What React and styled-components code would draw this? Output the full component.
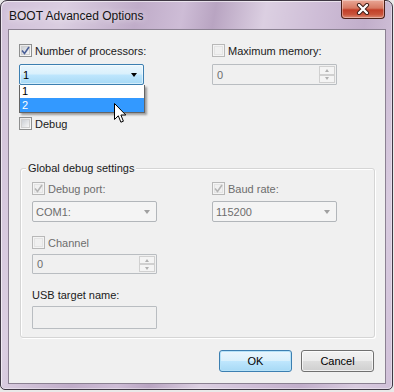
import React from "react";
import styled, { createGlobalStyle } from "styled-components";

const GlobalStyle = createGlobalStyle`
  html, body { margin: 0; padding: 0; background: #e9e9e9; }
  body { font-family: "Liberation Sans", Arial, sans-serif; font-size: 11px; color: #1a1a1a; }
  * { box-sizing: border-box; }
`;

const Window = styled.div`
  position: relative;
  width: 393px;
  height: 390px;
  border: 1px solid #3f3844;
  border-radius: 7px 7px 5px 5px;
  background:
    linear-gradient(100deg, rgba(255,255,255,0.1) 0%, rgba(255,255,255,0.3) 14%, rgba(110,80,120,0.12) 30%, rgba(255,255,255,0.05) 40%, rgba(100,70,110,0.18) 47%, rgba(255,255,255,0.32) 58%, rgba(255,255,255,0.05) 70%, rgba(110,80,120,0.1) 80%, rgba(255,255,255,0.25) 92%, rgba(255,255,255,0.1) 100%),
    #cbb9d4;
  padding: 0 6px 5px 7px;
  display: flex;
  flex-direction: column;
  box-shadow: inset 1px 1px 0 rgba(255,255,255,0.6), inset -1px -1px 0 rgba(255,255,255,0.4);
`;

const TitleBar = styled.div`
  height: 28px;
  display: flex;
  justify-content: space-between;
  align-items: flex-start;
`;

const Title = styled.div`
  font-size: 12px;
  padding-top: 8px;
  padding-left: 1px;
  color: #141414;
  text-shadow: 0 0 6px rgba(255,255,255,0.9);
`;

const CloseButton = styled.div`
  width: 44px;
  height: 19px;
  margin-top: -1px;
  margin-right: 1px;
  border: 1px solid #4b2018;
  border-top: none;
  border-radius: 0 0 4px 4px;
  background: linear-gradient(#e9a796 0%, #d77a63 45%, #c23f28 55%, #c9533a 80%, #dd8a74 100%);
  box-shadow: inset 0 0 0 1px rgba(255,255,255,0.35);
  display: flex;
  align-items: center;
  justify-content: center;
`;

const Client = styled.div`
  flex: 1;
  border: 1px solid #8b8192;
  background: #f0f0f0;
  display: flex;
  flex-direction: column;
  padding: 14px 0 0 10px;
`;

const TwoCols = styled.div`
  display: grid;
  grid-template-columns: 125px 125px;
  column-gap: ${(p) => p.$gap}px;
  align-items: start;
`;

const Col = styled.div`
  display: flex;
  flex-direction: column;
  position: relative;
`;

const CheckRow = styled.div`
  display: flex;
  align-items: center;
  height: 13px;
  gap: 3px;
  margin-top: ${(p) => p.$mt || 0}px;
  color: ${(p) => (p.$disabled ? "#6d6d6d" : "#1a1a1a")};
  white-space: nowrap;
`;

const Box = styled.span`
  width: 13px;
  height: 13px;
  flex: none;
  border: 1px solid ${(p) => (p.$disabled ? "#b8b8b8" : "#8e8f8f")};
  background: ${(p) =>
    p.$disabled
      ? "#f4f4f4"
      : "linear-gradient(135deg, #e6e6e6 0%, #fbfbfb 100%)"};
  display: flex;
  align-items: center;
  justify-content: center;
  position: relative;
  &::before {
    content: "";
    position: absolute;
    inset: 1px;
    border: 1px solid ${(p) => (p.$disabled ? "#e4e4e4" : "#cfcfcf")};
    background: ${(p) => (p.$disabled ? "#f0f0f0" : "linear-gradient(135deg, #cbcfd5 0%, #f6f6f6 100%)")};
  }
  svg { position: relative; }
`;

const ComboWrap = styled.div`
  position: relative;
  margin-top: ${(p) => p.$mt || 0}px;
`;

const Combo = styled.div`
  position: relative;
  height: 21px;
  margin-top: ${(p) => p.$mt || 0}px;
  border: 1px solid ${(p) => (p.$active ? "#3c7fb1" : "#b2b6ba")};
  border-radius: 2px;
  background: ${(p) =>
    p.$active
      ? "linear-gradient(#eaf6fd 0%, #d9f0fc 48%, #bee6fd 52%, #a7d9f5 100%)"
      : "#f4f4f4"};
  color: ${(p) => (p.$active ? "#000" : "#6d6d6d")};
  display: flex;
  align-items: center;
  justify-content: space-between;
  padding: 0 6px 0 3px;
  box-shadow: ${(p) => (p.$active ? "inset 0 0 0 1px rgba(255,255,255,0.5)" : "none")};
`;

const Arrow = styled.span`
  width: 0;
  height: 0;
  border-left: 3.5px solid transparent;
  border-right: 3.5px solid transparent;
  border-top: 4px solid ${(p) => (p.$active ? "#000" : "#a0a0a0")};
`;

const DropList = styled.div`
  position: absolute;
  left: 0;
  top: 100%;
  width: 126px;
  border: 1px solid #646464;
  border-top: none;
  background: #fff;
  box-shadow: 2px 2px 2px rgba(0, 0, 0, 0.35);
  z-index: 2;
`;

const Item = styled.div`
  height: ${(p) => p.$h}px;
  line-height: ${(p) => p.$h}px;
  padding-left: 2px;
  background: ${(p) => (p.$selected ? "#3399ff" : "#fff")};
  color: ${(p) => (p.$selected ? "#fff" : "#000")};
`;

const Spin = styled.div`
  height: ${(p) => p.$h}px;
  margin-top: ${(p) => p.$mt || 0}px;
  border: 1px solid #b9bdc1;
  border-radius: 1px;
  background: #f0f0f0;
  color: #6d6d6d;
  display: flex;
  align-items: center;
  justify-content: space-between;
  padding: 0 1px 0 4px;
`;

const SpinButtons = styled.div`
  display: flex;
  flex-direction: column;
  height: 100%;
  padding: 1px 0;
`;

const SpinBtn = styled.div`
  width: 16px;
  flex: 1;
  border: 1px solid #d0d0d0;
  background: #f4f4f4;
  display: flex;
  align-items: center;
  justify-content: center;
  &::after {
    content: "";
    border-left: 2.5px solid transparent;
    border-right: 2.5px solid transparent;
    ${(p) => (p.$up ? "border-bottom: 3px solid #b0b0b0;" : "border-top: 3px solid #b0b0b0;")}
  }
`;

const GroupBox = styled.div`
  position: relative;
  margin: 38px 10px 0 1px;
  border: 1px solid #d5d5d5;
  border-radius: 3px;
  box-shadow: inset 1px 1px 0 #fff, 1px 1px 0 #fff;
  padding: 13px 0 8px 11px;
`;

const GroupTitle = styled.span`
  position: absolute;
  top: -7px;
  left: 5px;
  padding: 0 2px;
  line-height: 13px;
  background: #f0f0f0;
  color: #1a1a1a;
`;

const Label = styled.div`
  height: 13px;
  line-height: 13px;
  margin-top: ${(p) => p.$mt || 0}px;
  color: #1a1a1a;
`;

const TextBox = styled.div`
  width: 125px;
  height: 23px;
  margin-top: 4px;
  border: 1px solid #b9bdc1;
  border-radius: 1px;
  background: #f0f0f0;
`;

const ButtonRow = styled.div`
  display: flex;
  justify-content: flex-end;
  gap: 9px;
  margin-top: 12px;
  padding-right: 11px;
`;

const Button = styled.div`
  width: 73px;
  height: 22px;
  border: 1px solid ${(p) => (p.$default ? "#3c7fb1" : "#707070")};
  border-radius: 3px;
  background: ${(p) =>
    p.$default
      ? "linear-gradient(#eaf6fd 0%, #d9f0fc 48%, #bee6fd 52%, #a7d9f5 100%)"
      : "linear-gradient(#f2f2f2 0%, #ebebeb 48%, #dddddd 52%, #cfcfcf 100%)"};
  box-shadow: inset 0 0 0 1px ${(p) => (p.$default ? "#b6e2f8" : "rgba(255,255,255,0.7)")};
  display: flex;
  align-items: center;
  justify-content: center;
  color: #000;
`;

const Cursor = styled.svg`
  position: absolute;
  left: 113px;
  top: 102px;
  z-index: 5;
`;

function Check({ checked, disabled }) {
  return (
    <Box $disabled={disabled}>
      {checked && (
        <svg width="9" height="9" viewBox="0 0 9 9">
          <path
            d="M1 4.5 L3.5 7.5 L8 1"
            fill="none"
            stroke={disabled ? "#b4b4b4" : "#4a5f97"}
            strokeWidth="1.6"
          />
        </svg>
      )}
    </Box>
  );
}

function SpinEdit({ value, h, mt }) {
  return (
    <Spin $h={h} $mt={mt}>
      <span>{value}</span>
      <SpinButtons>
        <SpinBtn $up />
        <SpinBtn />
      </SpinButtons>
    </Spin>
  );
}

export default function App() {
  return (
    <>
      <GlobalStyle />
      <Window>
        <TitleBar>
          <Title>BOOT Advanced Options</Title>
          <CloseButton>
            <svg width="14" height="12" viewBox="0 0 14 12">
              <path
                d="M3 2 L11 10 M11 2 L3 10"
                stroke="#3b1a14"
                strokeWidth="4.2"
                strokeLinecap="round"
              />
              <path
                d="M3 2 L11 10 M11 2 L3 10"
                stroke="#ffffff"
                strokeWidth="2.4"
                strokeLinecap="round"
              />
            </svg>
          </CloseButton>
        </TitleBar>
        <Client>
          <TwoCols $gap={68}>
            <Col>
              <CheckRow>
                <Check checked />
                <span>Number of processors:</span>
              </CheckRow>
              <ComboWrap $mt={7}>
                <Combo $active>
                  <span>1</span>
                  <Arrow $active />
                </Combo>
                <DropList>
                  <Item $h={13}>1</Item>
                  <Item $h={14} $selected>
                    2
                  </Item>
                </DropList>
              </ComboWrap>
              <CheckRow $mt={32}>
                <Check />
                <span>Debug</span>
              </CheckRow>
            </Col>
            <Col>
              <CheckRow>
                <Check disabled />
                <span>Maximum memory:</span>
              </CheckRow>
              <SpinEdit value="0" h={21} mt={7} />
            </Col>
          </TwoCols>
          <GroupBox>
            <GroupTitle>Global debug settings</GroupTitle>
            <TwoCols $gap={55}>
              <Col>
                <CheckRow $disabled>
                  <Check checked disabled />
                  <span>Debug port:</span>
                </CheckRow>
                <Combo $mt={6}>
                  <span>COM1:</span>
                  <Arrow />
                </Combo>
                <CheckRow $disabled $mt={14}>
                  <Check disabled />
                  <span>Channel</span>
                </CheckRow>
                <SpinEdit value="0" h={20} mt={5} />
              </Col>
              <Col>
                <CheckRow $disabled>
                  <Check checked disabled />
                  <span>Baud rate:</span>
                </CheckRow>
                <Combo $mt={6}>
                  <span>115200</span>
                  <Arrow />
                </Combo>
              </Col>
            </TwoCols>
            <Label $mt={15}>USB target name:</Label>
            <TextBox />
          </GroupBox>
          <ButtonRow>
            <Button $default>OK</Button>
            <Button>Cancel</Button>
          </ButtonRow>
        </Client>
        <Cursor width="13" height="21" viewBox="0 0 13 21">
          <path
            d="M0.5 0.5 L0.5 16.5 L4.3 12.8 L6.9 19.2 L9.4 18.2 L6.9 12 L11.8 12 Z"
            fill="#fff"
            stroke="#000"
            strokeWidth="1"
            strokeLinejoin="miter"
          />
        </Cursor>
      </Window>
    </>
  );
}
